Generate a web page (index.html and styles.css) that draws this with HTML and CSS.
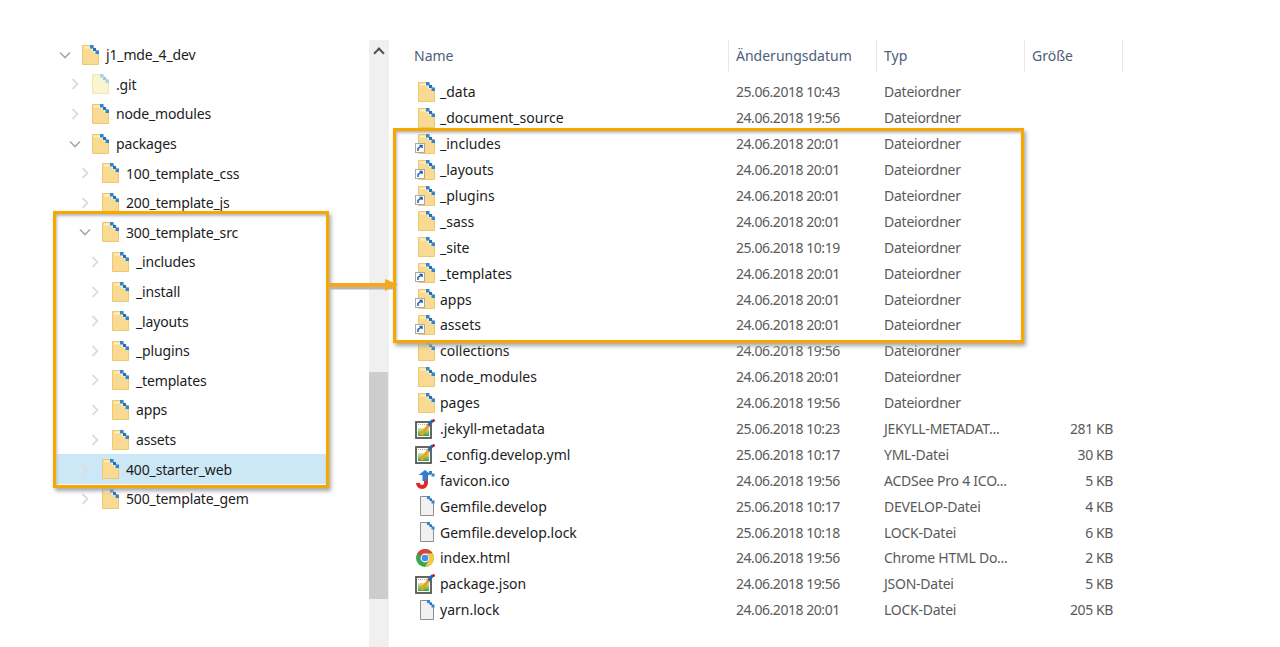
FILE: index.html
```html
<!DOCTYPE html>
<html lang="de">
<head>
    <meta charset="UTF-8">
    <title>j1_mde_4_dev</title>
    <link rel="stylesheet" href="styles.css">
</head>
<body>

    <svg class="defs" aria-hidden="true">
        <defs>
            <linearGradient id="green" x1="0" y1="0" x2="0" y2="1">
                <stop offset="0" stop-color="#e4e98c"/>
                <stop offset="1" stop-color="#35a548"/>
            </linearGradient>
            <symbol id="folder" viewBox="0 0 17 20">
                <path d="M.5.5H10L16.5 7V19.5H.5Z" fill="#f8da92" stroke="#efc76f"/>
                <path d="M2 1.5H9L14 7V9L8 3.5H2Z" fill="#fdf0c8"/>
                <rect x="8" y="0" width="3.5" height="3.5" fill="#2a86d8"/>
                <rect x="11" y="3" width="3" height="3" fill="#1f6fc0"/>
                <rect x="13.5" y="5.5" width="3.5" height="3.5" fill="#2a86d8"/>
            </symbol>
            <symbol id="folder-pale" viewBox="0 0 17 20">
                <path d="M.5.5H10L16.5 7V19.5H.5Z" fill="#f9f5cf" stroke="#f0e6ae"/>
                <rect x="8" y="0" width="3.5" height="3.5" fill="#a9d0f0"/>
                <rect x="11" y="3" width="3" height="3" fill="#9cc6ea"/>
                <rect x="13.5" y="5.5" width="3.5" height="3.5" fill="#a9d0f0"/>
            </symbol>
            <symbol id="shortcut" viewBox="0 0 10 10">
                <rect x=".5" y=".5" width="9" height="9" fill="#fff" stroke="#a9a9a9"/>
                <path d="M3 8V5.5L6.5 3M4.5 2.5H7V5" fill="none" stroke="#1f5fb0" stroke-width="1.5"/>
            </symbol>
            <symbol id="doc" viewBox="0 0 17 20">
                <path d="M2.5.5H10.5L15.5 6V19.5H2.5Z" fill="#f1f1f1" stroke="#8e8e8e"/>
                <rect x="9" y="0" width="3" height="3" fill="#2a86d8"/>
                <rect x="11.5" y="2.5" width="2.5" height="2.5" fill="#1f6fc0"/>
                <rect x="13.5" y="4.5" width="3" height="3" fill="#2a86d8"/>
            </symbol>
            <symbol id="notepad" viewBox="0 0 20 20">
                <rect x="1" y="3" width="15" height="16" fill="#fff" stroke="#555" stroke-width="1.8"/>
                <rect x="3" y="9" width="11" height="8" fill="url(#green)"/>
                <path d="M3 5.5H12" stroke="#aaa" stroke-dasharray="1 1"/>
                <path d="M6 16L14 6" stroke="#f0a020" stroke-width="3.2"/>
                <path d="M13.5 6.5L17.5 1.5" stroke="#2668b8" stroke-width="3"/>
                <circle cx="18.5" cy="1.5" r="1.5" fill="#b02030"/>
            </symbol>
            <symbol id="favicon" viewBox="0 0 20 20">
                <path d="M11 4V13A4 4 0 0 1 3 13" fill="none" stroke="#e02828" stroke-width="4"/>
                <path d="M10 0L3.5 5H7.5V11H12.5V5H16.5Z" fill="#2f7fd0"/>
                <rect x="14" y="1" width="3" height="3" fill="#2a86d8"/>
                <rect x="16.5" y="3.5" width="3" height="3" fill="#2a86d8"/>
            </symbol>
            <symbol id="chrome" viewBox="0 0 20 20">
                <circle cx="10" cy="10" r="9" fill="#3aa655"/>
                <path d="M2.2 5.5A9 9 0 0 1 17.8 5.5H10A4.5 4.5 0 0 0 6 8Z" fill="#dc4437"/>
                <path d="M17.8 5.5A9 9 0 0 1 10 19L14 12A4.5 4.5 0 0 0 10 5.5Z" fill="#f7c93e"/>
                <circle cx="10" cy="10" r="4.4" fill="#fff"/>
                <circle cx="10" cy="10" r="3.3" fill="#4a8af0"/>
            </symbol>
            <symbol id="chev-right" viewBox="0 0 8 12">
                <path d="M1.5 1L6.5 6L1.5 11" fill="none" stroke="#dcdcdc" stroke-width="1.8"/>
            </symbol>
            <symbol id="chev-down" viewBox="0 0 12 8">
                <path d="M1 1.5L6 6.5L11 1.5" fill="none" stroke="#a8a8a8" stroke-width="1.6"/>
            </symbol>
        </defs>
    </svg>

    <div class="window">

        <ul class="tree">
            <li class="node lvl-0"><span class="twist"><svg class="down"><use href="#chev-down"/></svg></span><svg class="ficon"><use href="#folder"/></svg>j1_mde_4_dev</li>
            <li class="node lvl-1"><span class="twist"><svg class="right"><use href="#chev-right"/></svg></span><svg class="ficon"><use href="#folder-pale"/></svg>.git</li>
            <li class="node lvl-1"><span class="twist"><svg class="right"><use href="#chev-right"/></svg></span><svg class="ficon"><use href="#folder"/></svg>node_modules</li>
            <li class="node lvl-1"><span class="twist"><svg class="down"><use href="#chev-down"/></svg></span><svg class="ficon"><use href="#folder"/></svg>packages</li>
            <li class="node lvl-2"><span class="twist"><svg class="right"><use href="#chev-right"/></svg></span><svg class="ficon"><use href="#folder"/></svg>100_template_css</li>
            <li class="node lvl-2"><span class="twist"><svg class="right"><use href="#chev-right"/></svg></span><svg class="ficon"><use href="#folder"/></svg>200_template_js</li>
            <li class="node lvl-2"><span class="twist"><svg class="down"><use href="#chev-down"/></svg></span><svg class="ficon"><use href="#folder"/></svg>300_template_src</li>
            <li class="node lvl-3"><span class="twist"><svg class="right"><use href="#chev-right"/></svg></span><svg class="ficon"><use href="#folder"/></svg>_includes</li>
            <li class="node lvl-3"><span class="twist"><svg class="right"><use href="#chev-right"/></svg></span><svg class="ficon"><use href="#folder"/></svg>_install</li>
            <li class="node lvl-3"><span class="twist"><svg class="right"><use href="#chev-right"/></svg></span><svg class="ficon"><use href="#folder"/></svg>_layouts</li>
            <li class="node lvl-3"><span class="twist"><svg class="right"><use href="#chev-right"/></svg></span><svg class="ficon"><use href="#folder"/></svg>_plugins</li>
            <li class="node lvl-3"><span class="twist"><svg class="right"><use href="#chev-right"/></svg></span><svg class="ficon"><use href="#folder"/></svg>_templates</li>
            <li class="node lvl-3"><span class="twist"><svg class="right"><use href="#chev-right"/></svg></span><svg class="ficon"><use href="#folder"/></svg>apps</li>
            <li class="node lvl-3"><span class="twist"><svg class="right"><use href="#chev-right"/></svg></span><svg class="ficon"><use href="#folder"/></svg>assets</li>
            <li class="node lvl-2 selected"><span class="twist"><svg class="right"><use href="#chev-right"/></svg></span><svg class="ficon"><use href="#folder"/></svg>400_starter_web</li>
            <li class="node lvl-2"><span class="twist"><svg class="right"><use href="#chev-right"/></svg></span><svg class="ficon"><use href="#folder"/></svg>500_template_gem</li>
        </ul>

        <div class="scrollbar">
            <span class="scroll-up"></span>
            <span class="scroll-thumb"></span>
        </div>

        <div class="files">
            <div class="row head">
                <span>Name</span>
                <span>Änderungsdatum</span>
                <span>Typ</span>
                <span>Größe</span>
            </div>

            <div class="row"><span class="name"><svg class="ficon"><use href="#folder"/></svg>_data</span><span class="date">25.06.2018 10:43</span><span class="type">Dateiordner</span><span></span></div>
            <div class="row"><span class="name"><svg class="ficon"><use href="#folder"/></svg>_document_source</span><span class="date">24.06.2018 19:56</span><span class="type">Dateiordner</span><span></span></div>
            <div class="row"><span class="name"><span class="link"><svg class="ficon"><use href="#folder"/></svg><svg class="badge"><use href="#shortcut"/></svg></span>_includes</span><span class="date">24.06.2018 20:01</span><span class="type">Dateiordner</span><span></span></div>
            <div class="row"><span class="name"><span class="link"><svg class="ficon"><use href="#folder"/></svg><svg class="badge"><use href="#shortcut"/></svg></span>_layouts</span><span class="date">24.06.2018 20:01</span><span class="type">Dateiordner</span><span></span></div>
            <div class="row"><span class="name"><span class="link"><svg class="ficon"><use href="#folder"/></svg><svg class="badge"><use href="#shortcut"/></svg></span>_plugins</span><span class="date">24.06.2018 20:01</span><span class="type">Dateiordner</span><span></span></div>
            <div class="row"><span class="name"><svg class="ficon"><use href="#folder"/></svg>_sass</span><span class="date">24.06.2018 20:01</span><span class="type">Dateiordner</span><span></span></div>
            <div class="row"><span class="name"><svg class="ficon"><use href="#folder"/></svg>_site</span><span class="date">25.06.2018 10:19</span><span class="type">Dateiordner</span><span></span></div>
            <div class="row"><span class="name"><span class="link"><svg class="ficon"><use href="#folder"/></svg><svg class="badge"><use href="#shortcut"/></svg></span>_templates</span><span class="date">24.06.2018 20:01</span><span class="type">Dateiordner</span><span></span></div>
            <div class="row"><span class="name"><span class="link"><svg class="ficon"><use href="#folder"/></svg><svg class="badge"><use href="#shortcut"/></svg></span>apps</span><span class="date">24.06.2018 20:01</span><span class="type">Dateiordner</span><span></span></div>
            <div class="row"><span class="name"><span class="link"><svg class="ficon"><use href="#folder"/></svg><svg class="badge"><use href="#shortcut"/></svg></span>assets</span><span class="date">24.06.2018 20:01</span><span class="type">Dateiordner</span><span></span></div>
            <div class="row"><span class="name"><svg class="ficon"><use href="#folder"/></svg>collections</span><span class="date">24.06.2018 19:56</span><span class="type">Dateiordner</span><span></span></div>
            <div class="row"><span class="name"><svg class="ficon"><use href="#folder"/></svg>node_modules</span><span class="date">24.06.2018 20:01</span><span class="type">Dateiordner</span><span></span></div>
            <div class="row"><span class="name"><svg class="ficon"><use href="#folder"/></svg>pages</span><span class="date">24.06.2018 19:56</span><span class="type">Dateiordner</span><span></span></div>
            <div class="row"><span class="name"><svg class="ficon wide"><use href="#notepad"/></svg>.jekyll-metadata</span><span class="date">25.06.2018 10:23</span><span class="type">JEKYLL-METADAT...</span><span class="size">281 KB</span></div>
            <div class="row"><span class="name"><svg class="ficon wide"><use href="#notepad"/></svg>_config.develop.yml</span><span class="date">25.06.2018 10:17</span><span class="type">YML-Datei</span><span class="size">30 KB</span></div>
            <div class="row"><span class="name"><svg class="ficon wide"><use href="#favicon"/></svg>favicon.ico</span><span class="date">24.06.2018 19:56</span><span class="type">ACDSee Pro 4 ICO...</span><span class="size">5 KB</span></div>
            <div class="row"><span class="name"><svg class="ficon"><use href="#doc"/></svg>Gemfile.develop</span><span class="date">25.06.2018 10:17</span><span class="type">DEVELOP-Datei</span><span class="size">4 KB</span></div>
            <div class="row"><span class="name"><svg class="ficon"><use href="#doc"/></svg>Gemfile.develop.lock</span><span class="date">25.06.2018 10:18</span><span class="type">LOCK-Datei</span><span class="size">6 KB</span></div>
            <div class="row"><span class="name"><svg class="ficon wide"><use href="#chrome"/></svg>index.html</span><span class="date">24.06.2018 19:56</span><span class="type">Chrome HTML Do...</span><span class="size">2 KB</span></div>
            <div class="row"><span class="name"><svg class="ficon wide"><use href="#notepad"/></svg>package.json</span><span class="date">24.06.2018 19:56</span><span class="type">JSON-Datei</span><span class="size">5 KB</span></div>
            <div class="row"><span class="name"><svg class="ficon"><use href="#doc"/></svg>yarn.lock</span><span class="date">24.06.2018 20:01</span><span class="type">LOCK-Datei</span><span class="size">205 KB</span></div>
        </div>
    </div>

    <!-- annotations drawn on top of the screenshot -->
    <div class="callout callout-tree"></div>
    <div class="callout callout-list"></div>
    <svg class="callout-arrow" width="72" height="16" viewBox="0 0 72 16">
        <path d="M0 10H66" stroke="#b5b5b5" stroke-width="3"/>
        <path d="M0 7H60" stroke="#f5a81c" stroke-width="4"/>
        <path d="M57 1L70 6.5L57 13Z" fill="#f5a81c"/>
    </svg>

</body>
</html>
```

FILE: styles.css
```css
* {
    box-sizing: border-box;
}

html, body {
    height: 100%;
}

body {
    margin: 0;
    background: white;
    font-family: "Noto Sans", "Open Sans", sans-serif;
    font-size: 14px;
    color: #1c1c1c;
    overflow: hidden;
}

.defs {
    position: absolute;
    width: 0;
    height: 0;
}

.window {
    display: flex;
    align-items: flex-start;
    padding-top: 40px;
    padding-left: 56px;
}

/* left tree */
.tree {
    list-style: none;
    margin: 0 43px 0 0;
    padding: 0;
    width: 270px;
    letter-spacing: -0.15px;
}

.node {
    display: flex;
    align-items: center;
    height: 29.6px;
    white-space: nowrap;
}

.lvl-0 { padding-left: 3px; }
.lvl-1 { padding-left: 13px; }
.lvl-2 { padding-left: 23px; }
.lvl-3 { padding-left: 33px; }

.selected {
    background: #cce8f6;
}

.twist {
    display: flex;
    justify-content: center;
    align-items: center;
    width: 12px;
    margin-right: 11px;
}

.twist .right {
    width: 8px;
    height: 12px;
}

.twist .down {
    width: 12px;
    height: 8px;
}

.node .ficon {
    margin-right: 7px;
}

.ficon {
    width: 17px;
    height: 20px;
    flex: none;
}

/* scrollbar between the panes */
.scrollbar {
    display: flex;
    flex-direction: column;
    align-items: center;
    width: 20px;
    height: 607px;
    background: #f0f0f0;
    flex: none;
}

.scroll-up {
    width: 8px;
    height: 8px;
    margin-top: 9px;
    border-left: 2px solid #505050;
    border-top: 2px solid #505050;
    transform: rotate(45deg);
}

.scroll-thumb {
    width: 19px;
    height: 227px;
    margin-top: 315px;
    margin-right: 1px;
    background: #cdcdcd;
}

/* file list */
.files {
    padding-left: 25px;
}

.row {
    display: grid;
    grid-template-columns: 322px 148px 148px 90px;
    align-items: center;
    height: 25.9px;
    color: #5a5a5a;
    white-space: nowrap;
}

.head {
    grid-template-columns: 315px 148px 148px 98px;
    height: 32px;
    margin-bottom: 7px;
    color: #4d6078;
}

.head > span {
    display: flex;
    align-items: center;
    height: 32px;
    padding-left: 7px;
    padding-bottom: 2px;
    border-right: 1px solid #e6e6e6;
}

.head > span:first-child {
    padding-left: 0;
}

.name {
    display: flex;
    align-items: center;
    padding-left: 4px;
    color: #1c1c1c;
}

.name .ficon {
    margin-right: 5px;
}

.name .ficon.wide {
    width: 20px;
    margin-left: -3px;
    margin-right: 5px;
}

.date {
    letter-spacing: -0.45px;
}

.type {
    letter-spacing: -0.25px;
}

.link {
    position: relative;
    display: flex;
}

.badge {
    position: absolute;
    left: -3px;
    bottom: 1px;
    width: 10px;
    height: 10px;
}

.size {
    padding-right: 9px;
    text-align: right;
    letter-spacing: -0.4px;
}

/* orange annotation frames */
.callout {
    position: absolute;
    border: 3px solid #f6a800;
    box-shadow: 2px 3px 4px #a8a8a8, inset 1px 2px 3px #b8b8b8;
}

.callout-tree {
    left: 53px;
    top: 211px;
    width: 276px;
    height: 277px;
}

.callout-list {
    left: 393px;
    top: 128px;
    width: 631px;
    height: 215px;
}

.callout-arrow {
    position: absolute;
    left: 328px;
    top: 278px;
}
```
